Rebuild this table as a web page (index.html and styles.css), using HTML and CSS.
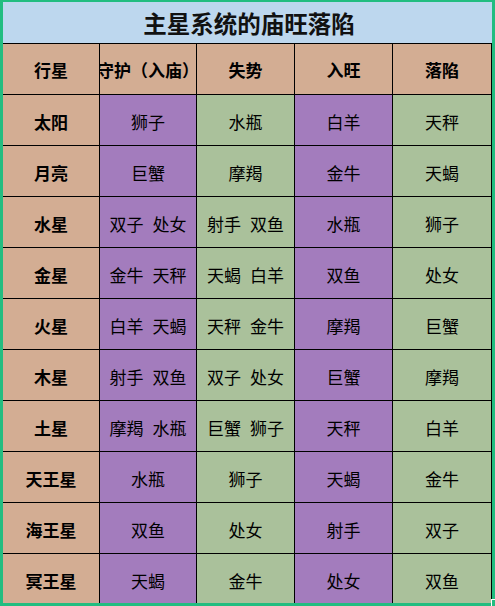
FILE: index.html
```html
<!DOCTYPE html>
<html lang="zh-CN">
<head>
<meta charset="utf-8">
<title>主星系统的庙旺落陷</title>
<link rel="stylesheet" href="styles.css">
</head>
<body>
<div class="frame">
  <div class="title">主星系统的庙旺落陷</div>
  <div class="grid">
    <div class="cell head">行星</div>
    <div class="cell head">守护（入庙）</div>
    <div class="cell head">失势</div>
    <div class="cell head">入旺</div>
    <div class="cell head">落陷</div>

    <div class="cell planet">太阳</div>
    <div class="cell purple">狮子</div>
    <div class="cell green">水瓶</div>
    <div class="cell purple">白羊</div>
    <div class="cell green">天秤</div>

    <div class="cell planet">月亮</div>
    <div class="cell purple">巨蟹</div>
    <div class="cell green">摩羯</div>
    <div class="cell purple">金牛</div>
    <div class="cell green">天蝎</div>

    <div class="cell planet">水星</div>
    <div class="cell purple">双子 处女</div>
    <div class="cell green">射手 双鱼</div>
    <div class="cell purple">水瓶</div>
    <div class="cell green">狮子</div>

    <div class="cell planet">金星</div>
    <div class="cell purple">金牛 天秤</div>
    <div class="cell green">天蝎 白羊</div>
    <div class="cell purple">双鱼</div>
    <div class="cell green">处女</div>

    <div class="cell planet">火星</div>
    <div class="cell purple">白羊 天蝎</div>
    <div class="cell green">天秤 金牛</div>
    <div class="cell purple">摩羯</div>
    <div class="cell green">巨蟹</div>

    <div class="cell planet">木星</div>
    <div class="cell purple">射手 双鱼</div>
    <div class="cell green">双子 处女</div>
    <div class="cell purple">巨蟹</div>
    <div class="cell green">摩羯</div>

    <div class="cell planet">土星</div>
    <div class="cell purple">摩羯 水瓶</div>
    <div class="cell green">巨蟹 狮子</div>
    <div class="cell purple">天秤</div>
    <div class="cell green">白羊</div>

    <div class="cell planet">天王星</div>
    <div class="cell purple">水瓶</div>
    <div class="cell green">狮子</div>
    <div class="cell purple">天蝎</div>
    <div class="cell green">金牛</div>

    <div class="cell planet">海王星</div>
    <div class="cell purple">双鱼</div>
    <div class="cell green">处女</div>
    <div class="cell purple">射手</div>
    <div class="cell green">双子</div>

    <div class="cell planet">冥王星</div>
    <div class="cell purple">天蝎</div>
    <div class="cell green">金牛</div>
    <div class="cell purple">处女</div>
    <div class="cell green">双鱼</div>
  </div>
  <div class="handle"></div>
</div>
</body>
</html>
```

FILE: styles.css
```css
html, body {
  margin: 0;
  padding: 0;
}

body {
  width: 495px;
  height: 606px;
  overflow: hidden;
  background: #22bd80;
  font-family: "Noto Sans CJK SC", "Noto Sans", sans-serif;
  color: #000;
}

.frame {
  position: relative;
  box-sizing: border-box;
  width: 495px;
  height: 606px;
  padding: 2px 3px 3px 3px;
  background: #22bd80;
  overflow: hidden;
}

.title {
  height: 41px;
  background: #bdd7ee;
  border-bottom: 1px solid #000;
  display: flex;
  align-items: center;
  justify-content: center;
  font-size: 23.5px;
  font-weight: 700;
  color: #111;
  padding-left: 3px;
}

.grid {
  display: grid;
  grid-template-columns: 96px 96px 97px 97px 98px;
  grid-template-rows: repeat(10, 50px) 49px;
  gap: 1px;
  padding-right: 1px;
  width: 488px;
  background: #000;
}

.cell {
  display: flex;
  align-items: center;
  justify-content: center;
  font-size: 17px;
  line-height: 1;
  padding-top: 3px;
  box-sizing: border-box;
  overflow: hidden;
  white-space: nowrap;
  word-spacing: 5px;
}

.head {
  background: #d3ad93;
  font-weight: 700;
  padding-top: 0;
}

.planet {
  background: #d3ad93;
  font-weight: 700;
}

.purple {
  background: #a37cbd;
}

.green {
  background: #aac19b;
}

.handle {
  position: absolute;
  left: 491px;
  top: 599px;
  width: 4px;
  height: 7px;
  border-left: 1px solid #fff;
  border-top: 1px solid #fff;
  box-sizing: border-box;
}
```
